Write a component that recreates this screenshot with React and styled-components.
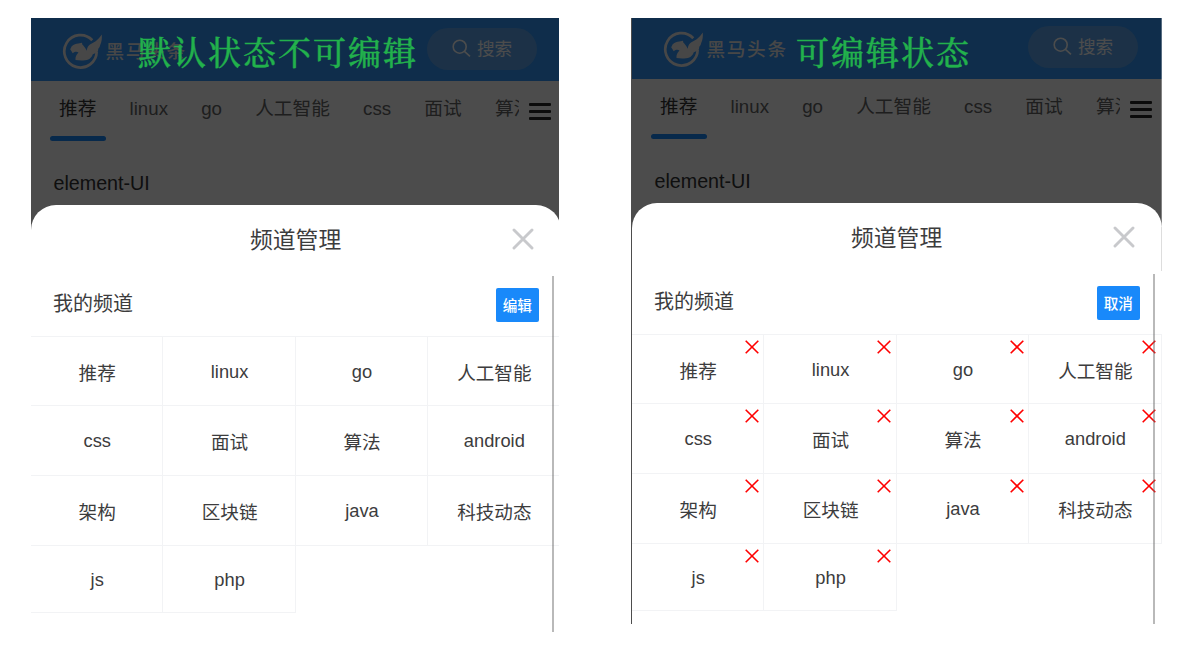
import React from 'react';
import styled, { createGlobalStyle } from 'styled-components';

const GlobalStyle = createGlobalStyle`
  * { box-sizing: border-box; }
  body { margin: 0; background: #fff; font-family: "Liberation Sans", "Noto Sans CJK SC", sans-serif; }
`;

const Board = styled.main`
  display: flex;
  align-items: flex-start;
  gap: 72px;
  height: 654px;
  padding: 18px 0 0 31px;
  overflow: hidden;
`;

const Phone = styled.section`
  position: relative;
  flex: none;
  width: ${(p) => (p.$editing ? 531 : 528)}px;
  height: ${(p) => (p.$editing ? 606 : 614)}px;
  border-left: ${(p) => (p.$editing ? '1px solid #4d4d4d' : 'none')};
  overflow: hidden;
`;

const Screen = styled.div`
  display: flex;
  flex-direction: column;
  width: 530px;
  height: 640px;
  margin-top: ${(p) => (p.$editing ? -2 : 0)}px;
`;

const Page = styled.div`
  position: relative;
  flex: none;
  height: 213px;
  background: #fff;
`;

const Scrim = styled.div`
  position: absolute;
  inset: 0;
  background: rgba(0, 0, 0, 0.7);
  box-shadow: inset -1px 0 rgba(255, 255, 255, 0.3);
`;

const Header = styled.header`
  display: flex;
  align-items: flex-start;
  justify-content: space-between;
  height: 63px;
  padding: 10px 24px 0 31px;
  background: #3296fa;
`;

const Brand = styled.div`
  display: flex;
  align-items: center;
  gap: 2.5px;
  height: 45px;
  color: #eee;
  font-size: 18.6px;
  font-weight: 500;
  letter-spacing: 1.7px;
  white-space: nowrap;
`;

const BrandName = styled.span`
  padding-bottom: 2px;
`;

const Search = styled.div`
  display: flex;
  align-items: center;
  justify-content: center;
  gap: 6px;
  width: 110px;
  height: 42px;
  padding-bottom: 2px;
  border-radius: 21px;
  background: #5ea6ee;
  color: #fff;
  font-size: 17.6px;
`;

const SearchLabel = styled.span`
  padding-bottom: 2px;
`;

const TabBar = styled.nav`
  display: flex;
  height: 80px;
  padding-left: 18px;
`;

const Tabs = styled.div`
  display: flex;
  width: 470px;
  padding-left: 10px;
  gap: 33.2px;
  overflow: hidden;
`;

const Tab = styled.div`
  position: relative;
  flex: none;
  height: 60px;
  color: ${(p) => (p.$active ? '#323233' : '#646566')};
  font-size: 18.7px;
  line-height: 56px;
  white-space: nowrap;
`;

const Underline = styled.i`
  position: absolute;
  left: -9.5px;
  top: 55px;
  width: 56.5px;
  height: 4.5px;
  border-radius: 3px;
  background: #1989fa;
`;

const MenuIcon = styled.div`
  display: flex;
  flex-direction: column;
  gap: 4px;
  width: 22px;
  margin: 22px 0 0 10px;
`;

const MenuLine = styled.span`
  height: 3px;
  border-radius: 1px;
  background: #262626;
`;

const Article = styled.div`
  padding: 8px 22.5px;
  color: #323233;
  font-size: 19.7px;
  line-height: 28px;
`;

const Sheet = styled.div`
  position: relative;
  flex: 1;
  margin-top: -26px;
  border-radius: 25px 25px 0 0;
  background: #fff;
`;

const SheetHead = styled.div`
  display: flex;
  align-items: center;
  height: 71px;
  padding: 0 27.5px 3px 219px;
  justify-content: space-between;
  background: linear-gradient(#ddd, #ddd) right 23px / 1px 44px no-repeat;
  background-origin: border-box;
  background-position: right 0 top 24px;
  border-radius: 25px 25px 0 0;
  color: #3c3c3d;
  font-size: 22.8px;
`;

const SheetTitle = styled.span`
  padding-bottom: 2px;
`;

const MyRow = styled.div`
  display: flex;
  align-items: center;
  justify-content: space-between;
  height: 60px;
  padding: 0 22.5px 0 22px;
  color: #3c3c3d;
  font-size: 20px;
`;

const RowLabel = styled.span`
  padding-bottom: 7px;
`;

const Button = styled.button`
  width: 42.5px;
  height: 34px;
  margin-top: -2px;
  padding: 0 0 2px;
  border: 0;
  border-radius: 2px;
  background: #1989fa;
  color: #fff;
  font: 500 14.6px "Liberation Sans", "Noto Sans CJK SC", sans-serif;
`;

const Grid = styled.div`
  display: grid;
  grid-template-columns: repeat(4, 132.4px);
  grid-template-rows: 69px 70px 70px 67px;
  border-top: 1px solid #f2f3f5;
`;

const Cell = styled.div`
  position: relative;
  display: flex;
  align-items: center;
  justify-content: center;
  border-right: 1px solid #f2f3f5;
  border-bottom: 1px solid #f2f3f5;
  color: #3c3c3d;
  font-size: ${(p) => (p.$latin ? 18.3 : 18.6)}px;
  padding-top: ${(p) => (p.$latin ? 1 : 0)}px;
  padding-left: 1px;
`;

const Remove = styled.svg`
  position: absolute;
  top: 5px;
  right: 4.5px;
`;

const ScrollThumb = styled.div`
  position: absolute;
  top: 71px;
  right: 7.5px;
  bottom: 0;
  width: 2px;
  background: rgba(100, 100, 100, 0.45);
`;

const Note = styled.div`
  position: absolute;
  left: ${(p) => p.$x}px;
  top: 11px;
  color: #22b14c;
  font-family: "Noto Serif CJK SC", "Noto Sans CJK SC", serif;
  font-size: 33px;
  font-weight: 500;
  line-height: 44px;
  letter-spacing: 2px;
  white-space: nowrap;
  -webkit-text-stroke: 0.4px #22b14c;
`;

const Logo = () => (
  <svg width="41" height="38" viewBox="0 0 41 38" fill="none">
    <path d="M30.3 8.2A16.2 16.2 0 1 0 34.7 19.5" stroke="#eee" strokeWidth="2.7" />
    <path
      d="M8.2 17.2L9.7 14.3C12 12.5 14 11.6 16.3 11.5L20 10.8L20.3 12.5C22 14 23.4 16 24.7 18.7C25.2 15.6 26.3 13.8 28 12.6L33.7 9.2C36.5 7 38 5 39.8 2.5C40 6.5 39.8 10 38.3 12.7L37.6 15L36.3 16.7L36 19C34.5 20.8 32.5 21.8 30.8 22.2C29.8 25 28.2 26.6 26.3 27.4C23 28.8 17.5 28.7 13.5 28C13.2 25 14.2 22.6 16.5 20.5C14.5 19.3 13 19.8 10.7 21.2L9.8 19.7Z"
      fill="#eee"
    />
  </svg>
);

const SearchIcon = () => (
  <svg width="19" height="19" viewBox="0 0 19 19" fill="none" stroke="#fff" strokeWidth="1.6">
    <circle cx="7.7" cy="7.7" r="6.5" />
    <path d="M12.4 12.4L18 17.4" />
  </svg>
);

const CloseIcon = () => (
  <svg width="22" height="22" viewBox="0 0 22 22" stroke="#c8c9cc" strokeWidth="2.9" strokeLinecap="round">
    <path d="M2 2L20 20M20 2L2 20" />
  </svg>
);

const tabs = ['推荐', 'linux', 'go', '人工智能', 'css', '面试', '算法'];
const channels = [...tabs, 'android', '架构', '区块链', 'java', '科技动态', 'js', 'php'];

function ChannelPhone({ editing, note, noteX }) {
  return (
    <Phone $editing={editing}>
      <Screen $editing={editing}>
        <Page>
          <Header>
            <Brand>
              <Logo />
              <BrandName>黑马头条</BrandName>
            </Brand>
            <Search>
              <SearchIcon />
              <SearchLabel>搜索</SearchLabel>
            </Search>
          </Header>
          <TabBar>
            <Tabs>
              {tabs.map((name, i) => (
                <Tab key={name} $active={i === 0}>
                  {name}
                  {i === 0 && <Underline />}
                </Tab>
              ))}
            </Tabs>
            <MenuIcon>
              <MenuLine />
              <MenuLine />
              <MenuLine />
            </MenuIcon>
          </TabBar>
          <Article>element-UI</Article>
          <Scrim />
        </Page>
        <Sheet>
          <SheetHead>
            <SheetTitle>频道管理</SheetTitle>
            <CloseIcon />
          </SheetHead>
          <MyRow>
            <RowLabel>我的频道</RowLabel>
            <Button>{editing ? '取消' : '编辑'}</Button>
          </MyRow>
          <Grid>
            {channels.map((name) => (
              <Cell key={name} $latin={/^[a-z]+$/.test(name)}>
                {name}
                {editing && (
                  <Remove width="14" height="14" viewBox="0 0 14 14" stroke="#f00" strokeWidth="1.6">
                    <path d="M.7 .7L13.3 13.3M13.3 .7L.7 13.3" />
                  </Remove>
                )}
              </Cell>
            ))}
          </Grid>
          <ScrollThumb />
        </Sheet>
      </Screen>
      <Note $x={noteX}>{note}</Note>
    </Phone>
  );
}

export default function App() {
  return (
    <>
      <GlobalStyle />
      <Board>
        <ChannelPhone note="默认状态不可编辑" noteX={107} />
        <ChannelPhone editing note="可编辑状态" noteX={164} />
      </Board>
    </>
  );
}
